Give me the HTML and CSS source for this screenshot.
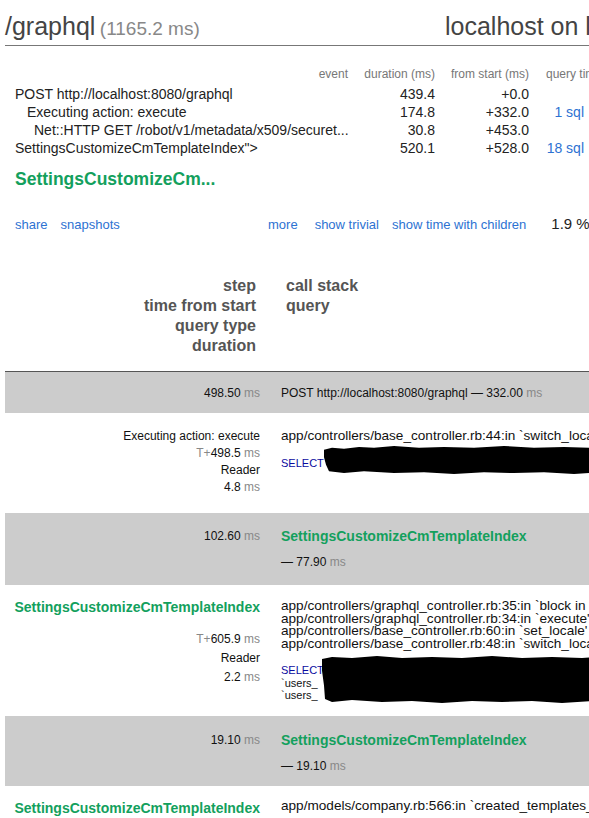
FILE: index.html
```html
<!DOCTYPE html>
<html>
<head>
<meta charset="utf-8">
<title>/graphql</title>
<link rel="stylesheet" href="styles.css">
</head>
<body>
<div class="page">
  <div class="title-bar">
    <div class="title"><span class="path">/graphql</span> <span class="total">(1165.2 ms)</span></div>
    <div class="host">localhost on localhost</div>
  </div>

  <div class="timings">
    <div class="trow thead">
      <span class="c1 hr">event</span><span class="c2">duration (ms)</span><span class="c3">from start (ms)</span><span class="c4 hl">query time (ms)</span>
    </div>
    <div class="trow">
      <span class="c1">POST http://localhost:8080/graphql</span><span class="c2">439.4</span><span class="c3">+0.0</span><span class="c4"></span>
    </div>
    <div class="trow">
      <span class="c1 ind1">Executing action: execute</span><span class="c2">174.8</span><span class="c3">+332.0</span><span class="c4"><a class="lnk" href="#">1 sql</a></span>
    </div>
    <div class="trow">
      <span class="c1 ind2">Net::HTTP GET /robot/v1/metadata/x509/securet...</span><span class="c2">30.8</span><span class="c3">+453.0</span><span class="c4"></span>
    </div>
    <div class="trow">
      <span class="c1">SettingsCustomizeCmTemplateIndex"&gt;</span><span class="c2">520.1</span><span class="c3">+528.0</span><span class="c4"><a class="lnk" href="#">18 sql</a></span>
    </div>
  </div>

  <div class="name-big">SettingsCustomizeCm...</div>

  <div class="links">
    <div class="links-left"><a class="lnk" href="#">share</a><a class="lnk gap13" href="#">snapshots</a></div>
    <a class="lnk" href="#">more</a>
    <a class="lnk gap17" href="#">show trivial</a>
    <a class="lnk gap13" href="#">show time with children</a>
    <span class="pct">1.9 %</span>
  </div>

  <div class="trace-head">
    <div class="th-left">step<br>time from start<br>query type<br>duration</div>
    <div class="th-right">call stack<br>query</div>
  </div>

  <div class="trace">
    <div class="tr gray first">
      <div class="tl"><span class="num">498.50</span> <span class="unit">ms</span></div>
      <div class="tc">POST http://localhost:8080/graphql — 332.00 <span class="unit">ms</span></div>
    </div>

    <div class="tr white rb">
      <div class="tl lines">
        <div>Executing action: execute</div>
        <div><span class="unit">T+</span>498.5 <span class="unit">ms</span></div>
        <div>Reader</div>
        <div>4.8 <span class="unit">ms</span></div>
      </div>
      <div class="tc">
        <div class="stack">app/controllers/base_controller.rb:44:in `switch_locale'</div>
        <div class="sql"><span class="kw">SELECT</span>
          <svg class="redact r1" viewBox="0 0 300 30" preserveAspectRatio="none" aria-hidden="true"><polygon points="0,4 8,2 20,3 35,1 50,2 70,0 95,2 120,1 150,2 180,0 210,2 240,1 270,2 300,1 300,29 280,28 250,30 220,28 190,29 160,28 130,30 100,28 70,29 40,27 20,29 5,27 2,20 0,12" fill="#000"/></svg>
        </div>
      </div>
    </div>

    <div class="tr gray two rc">
      <div class="tl"><span class="num">102.60</span> <span class="unit">ms</span></div>
      <div class="tc">
        <div class="gname">SettingsCustomizeCmTemplateIndex</div>
        <div class="sub">— 77.90 <span class="unit">ms</span></div>
      </div>
    </div>

    <div class="tr white rd">
      <div class="tl lines wide">
        <div class="gname first-line">SettingsCustomizeCmTemplateIndex</div>
        <div class="tplus"><span class="unit">T+</span>605.9 <span class="unit">ms</span></div>
        <div>Reader</div>
        <div>2.2 <span class="unit">ms</span></div>
      </div>
      <div class="tc">
        <div class="stack">app/controllers/graphql_controller.rb:35:in `block in execute'<br>app/controllers/graphql_controller.rb:34:in `execute'<br>app/controllers/base_controller.rb:60:in `set_locale'<br>app/controllers/base_controller.rb:48:in `switch_locale'</div>
        <div class="sql"><span class="kw">SELECT</span><br>`users_<br>`users_
          <svg class="redact r2" viewBox="0 0 300 48" preserveAspectRatio="none" aria-hidden="true"><polygon points="0,3 10,1 30,2 55,0 80,2 110,1 140,2 170,0 200,2 230,1 260,2 300,0 300,47 270,46 240,48 210,46 180,47 150,46 120,48 90,46 60,47 30,45 10,47 3,44 2,30 0,15" fill="#000"/></svg>
        </div>
      </div>
    </div>

    <div class="tr gray two re">
      <div class="tl"><span class="num">19.10</span> <span class="unit">ms</span></div>
      <div class="tc">
        <div class="gname">SettingsCustomizeCmTemplateIndex</div>
        <div class="sub">— 19.10 <span class="unit">ms</span></div>
      </div>
    </div>

    <div class="tr white rf">
      <div class="tl lines">
        <div class="gname">SettingsCustomizeCmTemplateIndex</div>
      </div>
      <div class="tc">
        <div class="stack">app/models/company.rb:566:in `created_templates_count'</div>
      </div>
    </div>
  </div>
</div>
</body>
</html>
```

FILE: styles.css
```css
html, body {
  margin: 0;
  padding: 0;
  overflow: hidden;
  background: #fff;
}

body {
  font-family: "Liberation Sans", Arial, Helvetica, sans-serif;
  color: #333;
}

.page {
  width: 820px;
}

a { text-decoration: none; }

.lnk { color: #2d72d2; }

/* title */
.title-bar {
  display: flex;
  margin-left: 5px;
  padding-top: 12px;
  padding-bottom: 1px;
  border-bottom: 1px solid #777;
  line-height: 29px;
  white-space: nowrap;
}

.title {
  width: 440px;
  flex: none;
}

.path {
  font-size: 25px;
  color: #444;
}

.total {
  font-size: 19px;
  color: #888;
}

.host {
  font-size: 25px;
  color: #444;
}

/* timings table */
.timings {
  margin: 19px 0 0 15px;
}

.trow {
  display: grid;
  grid-template-columns: 333px 87px 94px 55px;
  font-size: 14px;
  line-height: 18px;
  color: #222;
  white-space: nowrap;
}

.trow.thead {
  font-size: 12px;
  color: #777;
  margin-bottom: 2px;
}

.c1 { text-align: left; }
.c1.hr { text-align: right; }
.c2, .c3, .c4 { text-align: right; }
.c4.hl { text-align: left; padding-left: 17px; }
.ind1 { padding-left: 12px; }
.ind2 { padding-left: 19px; }

.name-big {
  margin: 12px 0 0 15px;
  font-size: 17.5px;
  line-height: 20px;
  font-weight: bold;
  color: #13a05d;
}

/* links */
.links {
  display: flex;
  align-items: baseline;
  margin: 27px 0 0 15px;
  font-size: 13px;
  line-height: 16px;
  white-space: nowrap;
}

.links-left {
  width: 253px;
  flex: none;
}

.gap13 { margin-left: 13px; }
.gap17 { margin-left: 17px; }

.pct {
  margin-left: 25px;
  font-size: 15px;
  color: #222;
}

/* trace header */
.trace-head {
  display: flex;
  margin: 43px 0 0 5px;
  font-size: 16px;
  line-height: 20px;
  font-weight: bold;
  color: #555;
  white-space: nowrap;
}

.th-left {
  width: 251px;
  text-align: right;
}

.th-right {
  margin-left: 30px;
}

/* trace rows */
.trace {
  margin: 15px 0 0 5px;
}

.tr {
  display: flex;
  align-items: flex-start;
  font-size: 12px;
  line-height: 16px;
  color: #111;
  white-space: nowrap;
}

.tr.gray { background: #cccccc; }
.tr.white { background: #fff; }

.tr.first {
  border-top: 1px solid #555;
  padding: 14px 0 13px;
  line-height: 14px;
}

.rc { padding: 15px 0 15px; }
.re { padding: 16px 0 12px; }

.tl {
  width: 255px;
  flex: none;
  text-align: right;
}

.tc {
  margin-left: 21px;
}

.unit { color: #888; }

.lines { line-height: 17px; }

.rb { padding: 15px 0 17px; }

.rd { padding: 15px 0 14.5px; }
.rd .first-line { margin-top: -1px; }
.rd .tplus { margin-top: 15px; }
.rd .tl.wide { line-height: 19px; }

.rf { padding: 14px 0 0; }

.gname {
  font-size: 14px;
  line-height: 16px;
  font-weight: bold;
  color: #13a05d;
}

.sub { margin-top: 10px; }

.stack {
  font-size: 13.6px;
  line-height: 12.5px;
  color: #111;
}

.rb .stack { padding-top: 2px; }

.sql {
  position: relative;
  margin-top: 14px;
  font-size: 11px;
  line-height: 12.5px;
  color: #111;
}

.kw { color: #0a0aa0; }

.redact {
  position: absolute;
  display: block;
}

.redact.r1 {
  left: 43px;
  top: -11px;
  width: 300px;
  height: 28px;
}

.redact.r2 {
  left: 41px;
  top: -8px;
  width: 300px;
  height: 47px;
}
```
